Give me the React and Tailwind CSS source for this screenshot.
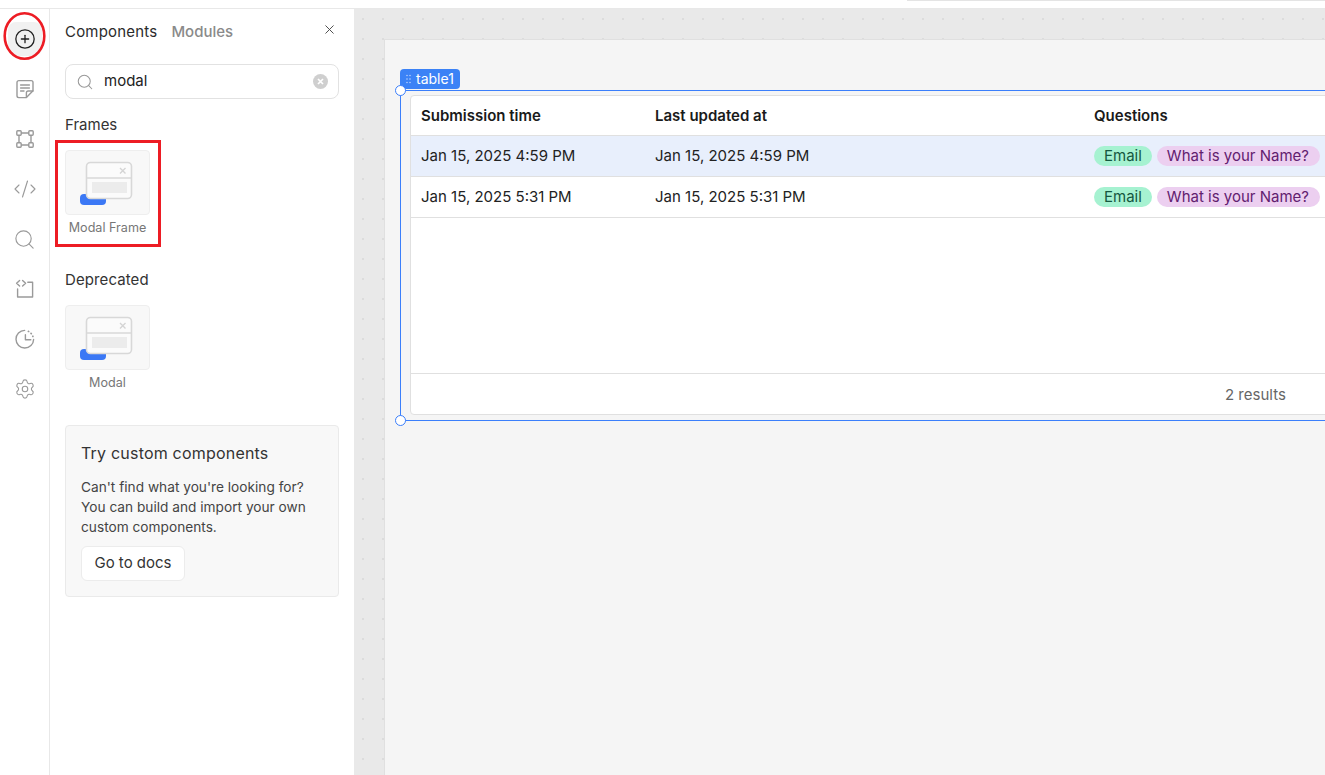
import { CirclePlus, CodeXml, Search, Settings, X } from 'lucide-react';

function NotesIcon() {
  return (
    <svg width="20" height="20" viewBox="0 0 20 20" fill="none" stroke="currentColor" strokeWidth="1.4" strokeLinejoin="round" strokeLinecap="round">
      <path d="M2 3.4c0-1 .8-1.8 1.8-1.8h12.4c1 0 1.8.8 1.8 1.8v8.4l-6.6 6.8H3.8c-1 0-1.8-.8-1.8-1.8z" />
      <path d="M11.4 18.4v-4.6c0-1 .8-1.8 1.8-1.8H18" />
      <path d="M5.6 6h8.8M5.6 9h8.8M5.6 12h3.4" />
    </svg>
  );
}

function ComponentIcon() {
  return (
    <svg width="20" height="20" viewBox="0 0 20 20" fill="none" stroke="currentColor" strokeWidth="1.4">
      <rect x="1.8" y="1.8" width="4.4" height="4.4" rx="0.9" />
      <rect x="13.8" y="1.8" width="4.4" height="4.4" rx="0.9" />
      <rect x="1.8" y="13.8" width="4.4" height="4.4" rx="0.9" />
      <rect x="13.8" y="13.8" width="4.4" height="4.4" rx="0.9" />
      <path d="M6.2 4h7.6M6.2 16h7.6M4 6.2v7.6M16 6.2v7.6" />
    </svg>
  );
}

function SnippetIcon() {
  return (
    <svg width="20" height="20" viewBox="0 0 20 20" fill="none" stroke="currentColor" strokeWidth="1.4" strokeLinecap="round" strokeLinejoin="round">
      <path d="M4.6 1.4 1.6 4.2l3 2.8M7.6 1.4l3 2.8-3 2.8" />
      <path d="M12.8 3.2h4.8V18H2.6V10" />
    </svg>
  );
}

function HistoryIcon() {
  return (
    <svg width="20" height="20" viewBox="0 0 20 20" fill="none" stroke="currentColor" strokeWidth="1.4" strokeLinecap="round" strokeLinejoin="round">
      <path d="M9.6 1.4a8.8 8.8 0 1 0 9 9" />
      <path d="M10.4 5.8v5h5.4" />
      <path d="M13.4 2.4l.3.1M16 4.4l.3.3M17.8 7.2l.1.3" strokeWidth="1.7" />
    </svg>
  );
}

function ModalThumb() {
  return (
    <svg width="85" height="65" viewBox="0 0 85 65" fill="none">
      <rect x="15" y="44" width="26" height="11" rx="4" fill="#3b78f5" />
      <rect x="21.5" y="12.5" width="45" height="36" rx="4" fill="#fbfbfb" stroke="#d8d8d8" strokeWidth="1.6" />
      <path d="M21.5 28h45" stroke="#d8d8d8" strokeWidth="1.6" />
      <rect x="27" y="32" width="35" height="11" fill="#ececec" />
      <path d="M55 18l5.5 5.5M60.5 18 55 23.5" stroke="#d4d4d4" strokeWidth="1.4" />
    </svg>
  );
}

const NAV_ICONS = [
  { key: 'notes', node: <NotesIcon /> },
  { key: 'components', node: <ComponentIcon /> },
  { key: 'code', node: <CodeXml size={24} strokeWidth={1.1} /> },
  { key: 'search', node: <Search size={23} strokeWidth={1.2} /> },
  { key: 'snippet', node: <SnippetIcon /> },
  { key: 'history', node: <HistoryIcon /> },
  { key: 'settings', node: <Settings size={22} strokeWidth={1.2} /> },
];

const ROWS = [
  { time: 'Jan 15, 2025 4:59 PM', active: true },
  { time: 'Jan 15, 2025 5:31 PM', active: false },
];

function Sidebar() {
  return (
    <div className="relative w-[50px] shrink-0 border-r border-[#e8e8e8] flex flex-col items-center pt-[13px]">
      <div className="w-[34px] h-[34px] rounded-lg bg-[#f1f1f1] text-[#1f1f1f] flex items-center justify-center mb-[16px]">
        <CirclePlus size={22} strokeWidth={1.4} />
      </div>
      {NAV_ICONS.map(({ key, node }) => (
        <div key={key} className="w-[34px] h-[34px] mb-[16px] text-[#9a9a9a] flex items-center justify-center">
          {node}
        </div>
      ))}
      {/* red annotation around the add button */}
      <svg className="absolute left-[3px] top-[2px]" width="44" height="50" viewBox="0 0 44 50" fill="none">
        <ellipse cx="21.5" cy="25" rx="19.8" ry="22.8" stroke="#ed1c24" strokeWidth="2.6" />
      </svg>
    </div>
  );
}

function Panel() {
  return (
    <div className="w-[304px] shrink-0 px-[15px] relative">
      <div className="flex items-center gap-[14px] pt-px h-[46px] text-[15px]">
        <span className="text-[#2b2b2b] font-normal tracking-[0.2px]">Components</span>
        <span className="text-[#8a8a8a] font-medium">Modules</span>
      </div>
      <X size={15} strokeWidth={1.5} className="absolute right-[17px] top-[13px] text-[#444]" />

      <div className="mt-[9px] h-[35px] w-[274px] rounded-lg border border-[#e2e2e2] flex items-center pl-[10px] pr-[10px]">
        <Search size={18} strokeWidth={1.4} className="text-[#999]" />
        <span className="ml-[10px] flex-1 text-[15px] text-[#222]">modal</span>
        <svg width="15" height="15" viewBox="0 0 15 15">
          <circle cx="7.5" cy="7.5" r="7.5" fill="#cfcfcf" />
          <path d="M5 5l5 5M10 5l-5 5" stroke="#fff" strokeWidth="1.7" />
        </svg>
      </div>

      <div className="mt-[16px] h-[20px] text-[15px] text-[#333] leading-[20px]">Frames</div>

      <div className="mt-[5px] -ml-[10px] w-[106px] h-[107px] border-[3px] border-[#ed1c24] pl-[7px] pt-[7px]">
        <div className="w-[85px] h-[65px] rounded-[4px] bg-[#f8f8f8] border border-[#eeeeee] overflow-hidden">
          <div className="-m-px"><ModalThumb /></div>
        </div>
        <div className="w-[85px] mt-[4px] text-center text-[12.6px] text-[#777] whitespace-nowrap">Modal Frame</div>
      </div>

      <div className="mt-[23px] h-[20px] text-[15px] tracking-[0.1px] text-[#333] leading-[20px]">Deprecated</div>

      <div className="mt-[15px] w-[85px] h-[65px] rounded-[4px] bg-[#f8f8f8] border border-[#eeeeee] overflow-hidden">
        <div className="-m-px"><ModalThumb /></div>
      </div>
      <div className="w-[85px] mt-[4px] text-center text-[12.6px] text-[#777]">Modal</div>

      <div className="mt-[32px] w-[274px] h-[172px] rounded-[4px] bg-[#f8f8f8] border border-[#eaeaea] pl-[15px] pt-[17px]">
        <div className="text-[16px] leading-[20px] font-normal tracking-[0.2px] text-[#333]">Try custom components</div>
        <div className="mt-[14px] text-[13.7px] leading-[20px] text-[#444] whitespace-pre-line">
          {"Can't find what you're looking for?\nYou can build and import your own\ncustom components."}
        </div>
        <div className="mt-[9px] w-[104px] h-[35px] rounded-md bg-white border border-[#ececec] flex items-center justify-center text-[15px] text-[#333]">
          Go to docs
        </div>
      </div>
    </div>
  );
}

function Pill({ className, children }) {
  return (
    <span className={`h-[20px] px-[10px] rounded-full text-[15px] leading-[20px] whitespace-nowrap ${className}`}>
      {children}
    </span>
  );
}

function TableWidget() {
  return (
    <div className="relative ml-[15px] mt-[50px] w-[1000px] h-[331px] border border-[#3b7ffb] pl-[9px] pt-[4px]">
      <div className="absolute -left-px -top-[22px] h-[20px] w-[60px] rounded-[4px] bg-[#3b82f6] text-white text-[14px] leading-[20px] flex items-center pl-[5px]">
        <svg width="9" height="10" viewBox="0 0 9 10" fill="#cfe0ff" className="mr-[2px]">
          <circle cx="2" cy="1.5" r="0.7" /><circle cx="5" cy="1.5" r="0.7" />
          <circle cx="2" cy="5" r="0.7" /><circle cx="5" cy="5" r="0.7" />
          <circle cx="2" cy="8.5" r="0.7" /><circle cx="5" cy="8.5" r="0.7" />
        </svg>
        table1
      </div>
      <span className="absolute -left-[6px] -top-[6px] w-[11px] h-[11px] rounded-full bg-white border border-[#3b7ffb]" />
      <span className="absolute -left-[6px] -bottom-[6px] w-[11px] h-[11px] rounded-full bg-white border border-[#3b7ffb]" />

      <div className="w-[985px] h-[320px] rounded-[4px] bg-white border border-[#e0e0e0] flex flex-col text-[15px] text-[#222]">
        <div className="h-[40px] pt-[2px] flex items-center font-semibold text-[#1a1a1a] border-b border-[#e0e0e0]">
          <div className="w-[244px] pl-[10px]">Submission time</div>
          <div className="w-[439px]">Last updated at</div>
          <div>Questions</div>
        </div>
        {ROWS.map(({ time, active }) => (
          <div key={time} className={`h-[41px] flex items-center border-b border-[#e0e0e0] ${active ? 'bg-[#e8effc]' : ''}`}>
            <div className="w-[244px] pl-[10px]">{time}</div>
            <div className="w-[439px]">{time}</div>
            <div className="flex gap-[5px]">
              <Pill className="bg-[#a6f2d1] text-[#14573f]">Email</Pill>
              <Pill className="pr-[11px] bg-[#eccff0] text-[#62206f]">What is your Name?</Pill>
            </div>
          </div>
        ))}
        <div className="flex-1" />
        <div className="h-[41px] pt-[2px] border-t border-[#e0e0e0] flex items-center pl-[814px] text-[#666]">2 results</div>
      </div>
    </div>
  );
}

export default function App() {
  return (
    <div className="h-screen w-screen overflow-hidden bg-white flex flex-col font-['Inter',sans-serif]">
      <div className="h-[9px] shrink-0 border-b border-[#e8e8e8] flex justify-end">
        <div className="w-[418px] h-px bg-[#e4e4e4]" />
      </div>
      <div className="flex-1 flex min-h-0">
        <Sidebar />
        <Panel />
        <div className="flex-1 min-w-0 overflow-hidden pl-[30px] pt-[30px] bg-[#e9e9e9] bg-[radial-gradient(circle,#dcdcdc_1px,transparent_1.2px)] bg-[size:20px_20px] bg-[position:-1px_0px]">
          <div className="h-[800px] w-[1000px] bg-[#f5f5f5] border border-[#e0e0e0] flex flex-col">
            <TableWidget />
          </div>
        </div>
      </div>
    </div>
  );
}
